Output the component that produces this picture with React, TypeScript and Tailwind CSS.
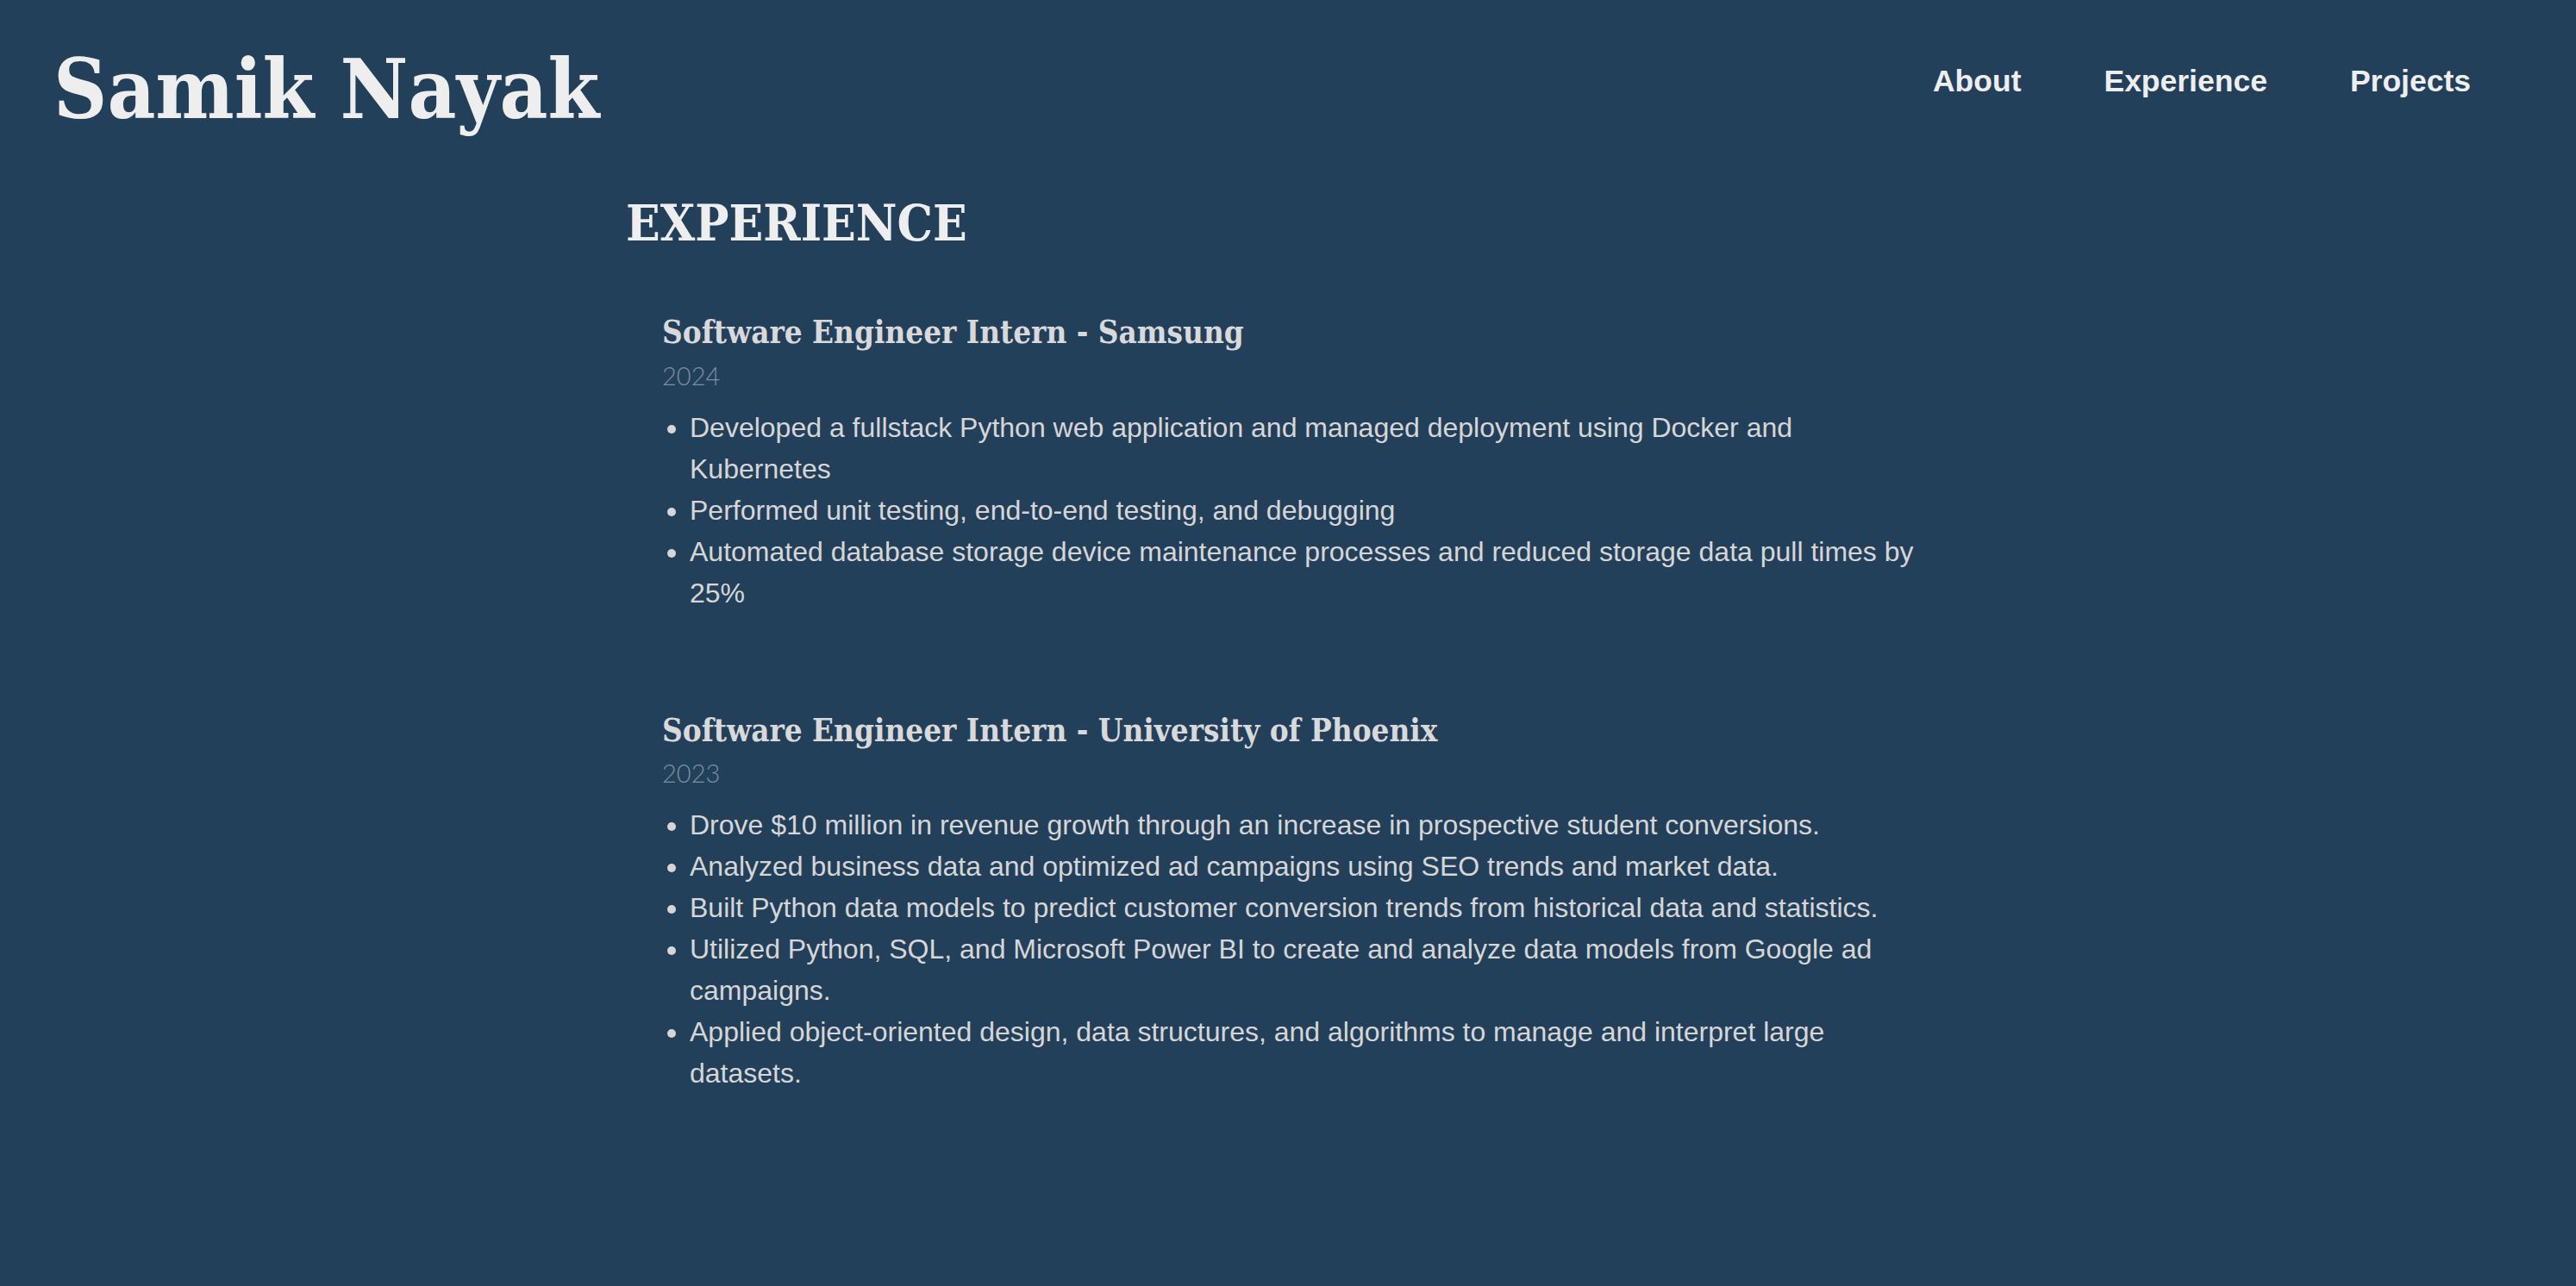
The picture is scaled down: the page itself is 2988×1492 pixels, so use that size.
const jobs = [
  {
    title: "Software Engineer Intern - Samsung",
    year: "2024",
    points: [
      "Developed a fullstack Python web application and managed deployment using Docker and Kubernetes",
      "Performed unit testing, end-to-end testing, and debugging",
      "Automated database storage device maintenance processes and reduced storage data pull times by 25%",
    ],
  },
  {
    title: "Software Engineer Intern - University of Phoenix",
    year: "2023",
    points: [
      "Drove $10 million in revenue growth through an increase in prospective student conversions.",
      "Analyzed business data and optimized ad campaigns using SEO trends and market data.",
      "Built Python data models to predict customer conversion trends from historical data and statistics.",
      "Utilized Python, SQL, and Microsoft Power BI to create and analyze data models from Google ad campaigns.",
      "Applied object-oriented design, data structures, and algorithms to manage and interpret large datasets.",
    ],
  },
];

const serif = "font-['DejaVu_Serif_Condensed','DejaVu_Serif',serif]";

export default function App() {
  return (
    <div className="min-h-screen bg-[#23405a] text-[#eeeeee]">
      <header className="flex items-start justify-between pl-[62px] pr-[122px] pt-[56px]">
        <h1 className={`${serif} text-[96px] leading-none font-bold text-[#eeeeee]`}>Samik Nayak</h1>
        <nav className="mt-[21px] flex gap-[96px] font-['Liberation_Sans',Arial,sans-serif] text-[35.5px] leading-none font-bold text-[#eeeeee]">
          <a href="#about">About</a>
          <a href="#experience">Experience</a>
          <a href="#projects">Projects</a>
        </nav>
      </header>

      <main className="max-w-[1536px] mx-auto">
        <h2 className={`${serif} mt-[78px] text-[58px] leading-none font-bold text-[#eeeeee]`}>EXPERIENCE</h2>

        <div className="mt-[80px] flex flex-col gap-[118px] pb-[200px]">
          {jobs.map((job) => (
            <div key={job.title} className="px-[42px]">
              <h3 className={`${serif} text-[36.5px] leading-none font-bold text-[#d9d9d9]`}>{job.title}</h3>
              <p className="mt-[16px] font-['Lato',sans-serif] font-light text-[29px] leading-none text-[#7b8fa3]">{job.year}</p>
              <ul className="mt-[22px] list-disc pl-[32px] font-['Liberation_Sans',Arial,sans-serif] text-[32px] leading-[48px] text-[#d6d6d6]">
                {job.points.map((p) => (
                  <li key={p}>{p}</li>
                ))}
              </ul>
            </div>
          ))}
        </div>
      </main>
    </div>
  );
}
